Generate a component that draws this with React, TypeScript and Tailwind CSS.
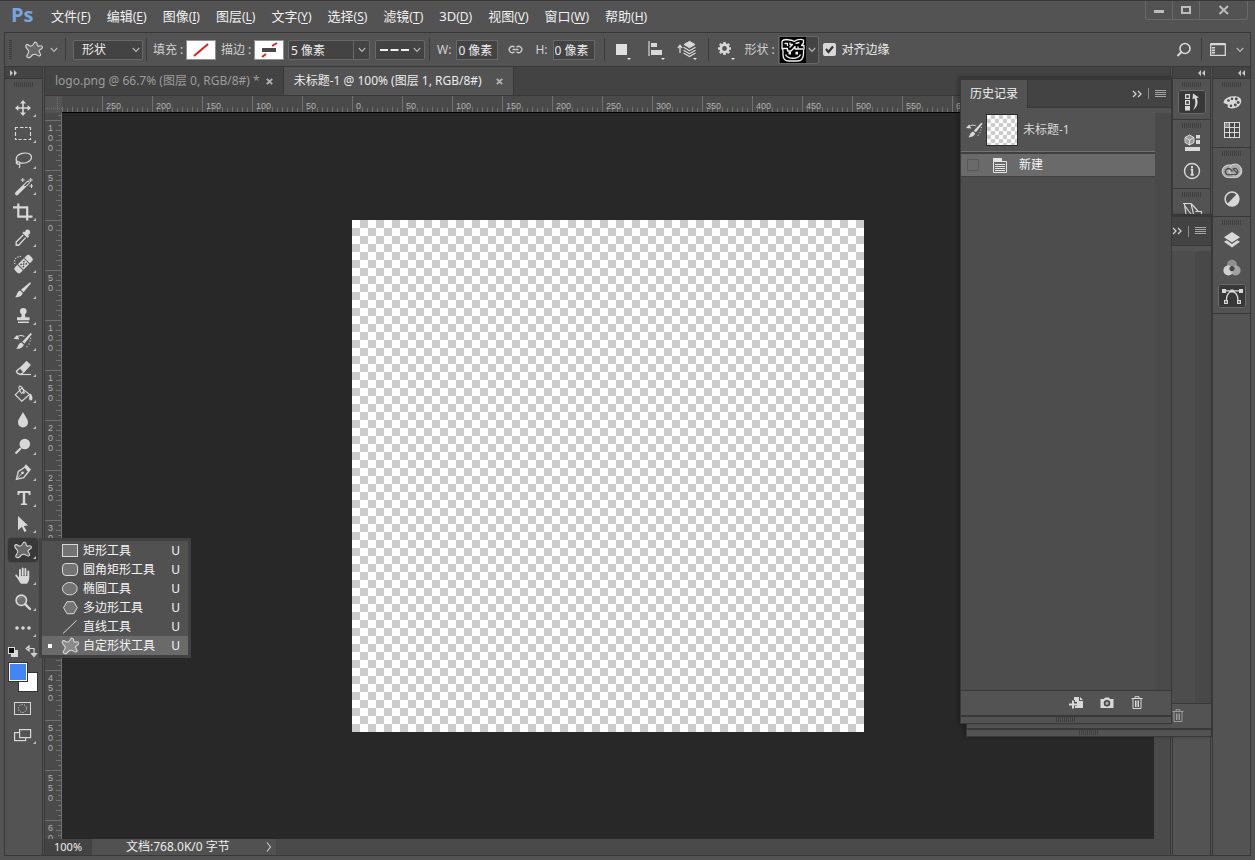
import type { ReactNode } from "react";

const FG = "#d8d8d8";

/* ---------- small shared pieces ---------- */

function Grip({ className = "" }: { className?: string }) {
  return (
    <div
      className={
        "h-[5px] w-[20px] shrink-0 bg-[repeating-linear-gradient(90deg,#3f3f3f_0_1px,transparent_1px_2px)] " + className
      }
    />
  );
}

function Chevron({ className = "" }: { className?: string }) {
  return (
    <svg width="8" height="6" viewBox="0 0 8 6" className={"pointer-events-none shrink-0 " + className}>
      <path d="M0.8 1 L4 4.4 L7.2 1" fill="none" stroke="#b8b8b8" strokeWidth="1.1" />
    </svg>
  );
}

function MenuLines() {
  return (
    <svg width="11" height="8" viewBox="0 0 11 8">
      <path d="M0 .5H11M0 2.5H11M0 4.5H11M0 6.5H11" stroke="#a4a4a4" />
    </svg>
  );
}

function DoubleRight() {
  return (
    <svg width="10" height="8" viewBox="0 0 10 8">
      <path d="M1 1L4 4L1 7M6 1L9 4L6 7" fill="none" stroke="#d0d0d0" strokeWidth="1.3" />
    </svg>
  );
}

function Trash({ color = FG }: { color?: string }) {
  return (
    <svg width="12" height="14" viewBox="0 0 12 14">
      <path d="M.5 2.5H11.5M4 2.3V.7H8V2.3M2 3V12.5H10V3M4.5 4.5V11M6 4.5V11M7.5 4.5V11" fill="none" stroke={color} />
    </svg>
  );
}

function Blob({ selected = false }: { selected?: boolean }) {
  return (
    <path
      d="M6.8 6.6C7.5 5.2 9 5.4 10 6.3C11.5 7.6 13 7.2 14 5.8L15 4.2C15.8 2.8 17.6 2.8 18 4.4L18.2 6C18.4 7.2 19.2 7.3 20.4 6.9C22.5 6.2 24 7.4 23.2 9C22.6 10.2 20.4 10.4 20 11.8C19.7 13 21.6 14.2 21.6 15.6C21.5 17.3 19.8 17.4 18.4 16.4C16.8 15.2 14.8 14.8 13.4 16L11.4 18C9.8 19.4 7.4 18.6 7.8 16.8C8 15.4 10 14 9.8 12.4C9.6 10.6 6 9 6.8 6.6Z"
      fill={selected ? "#8a8a8a" : "#686868"}
      stroke={FG}
      strokeWidth="1.1"
    />
  );
}

function HistoryBrush() {
  return (
    <g fill={FG}>
      <path d="M22.5 4L24 5L16.6 14.5L14.2 12.7Z" />
      <path d="M13.3 13.6L15.8 15.6C15 19 11.5 20 8.2 20C10 18.4 9.8 15 13.3 13.6Z" />
      <path d="M9 6L5.6 9.8L11.4 10.4Z" />
      <path d="M8.6 8.2C11 6 14 6.2 16.4 7.4" fill="none" stroke={FG} strokeWidth="1.1" />
      <path d="M22 9.2H23.2M21.5 12H22.7M20.4 15H21.6M18.4 17.8H19.6" stroke={FG} strokeWidth="1.1" />
    </g>
  );
}

/* ---------- menu bar ---------- */

const menus: [string, string][] = [
  ["文件", "F"],
  ["编辑", "E"],
  ["图像", "I"],
  ["图层", "L"],
  ["文字", "Y"],
  ["选择", "S"],
  ["滤镜", "T"],
  ["3D", "D"],
  ["视图", "V"],
  ["窗口", "W"],
  ["帮助", "H"],
];

function MenuBar() {
  return (
    <header className="flex h-[31px] shrink-0 items-start pl-[11px] pr-[7px]">
      <div className="w-[40px] font-['Open_Sans',sans-serif] text-[20px] leading-[28px] font-bold text-[#78a3dc]">Ps</div>
      <nav className="flex gap-[16px] pt-[6px]">
        {menus.map(([name, key]) => (
          <button key={name} className="flex items-baseline text-[13px] leading-[18px] whitespace-nowrap text-[#f0f0f0]">
            {name}
            <span className="text-[12px]">
              (<u className="underline-offset-2">{key}</u>)
            </span>
          </button>
        ))}
      </nav>
      <div className="ml-auto flex h-[19px] divide-x divide-[#696969] rounded-b-[3px] border border-t-0 border-[#696969]">
        <button aria-label="最小化" className="flex w-[27px] items-center justify-center">
          <svg width="12" height="10"><rect x="1" y="5" width="10" height="3" fill="#bcbcbc" /></svg>
        </button>
        <button aria-label="最大化" className="flex w-[27px] items-center justify-center">
          <svg width="12" height="10"><rect x="2" y="2" width="8" height="6" fill="none" stroke="#bcbcbc" strokeWidth="2" /></svg>
        </button>
        <button aria-label="关闭" className="flex w-[47px] items-center justify-center">
          <svg width="12" height="10"><path d="M1.5 1L10 9M10 1L1.5 9" stroke="#bcbcbc" strokeWidth="2" /></svg>
        </button>
      </div>
    </header>
  );
}

/* ---------- options bar ---------- */

function Divider({ className = "" }: { className?: string }) {
  return <div className={"h-[23px] w-px shrink-0 bg-[#3c3c3c] " + className} />;
}

function CornerDot() {
  return <path d="M0 0H4L2 2Z" fill="#e8e8e8" />;
}

function OptionsBar() {
  const field = "h-[20px] rounded-[2px] border border-[#686868] bg-[#434343] text-[12px] text-[#ececec] outline-none";
  return (
    <div className="mx-[4px] flex h-[34px] shrink-0 items-center border-x border-t border-[#383838] pl-[4px] text-[12px] whitespace-nowrap text-[#d0d0d0]">
      <div className="h-[20px] w-[3px] shrink-0 bg-[repeating-linear-gradient(180deg,#3c3c3c_0_1px,transparent_1px_2px)]" />
      <button aria-label="自定形状工具" className="ml-[7px] flex shrink-0 items-center gap-[4px]">
        <svg width="30" height="26" viewBox="0 0 30 26"><g transform="translate(0 2)"><Blob /></g></svg>
        <Chevron className="-ml-[3px]" />
      </button>
      <Divider className="ml-[7px]" />
      <div className="relative ml-[7px] flex shrink-0 items-center">
        <select aria-label="工具模式" className={field + " w-[70px] appearance-none pl-[8px]"} defaultValue="形状">
          <option>形状</option>
          <option>路径</option>
        </select>
        <Chevron className="absolute right-[3px]" />
      </div>
      <Divider className="ml-[3px]" />
      <span className="ml-[6px] w-[30px]">填充 :</span>
      <button aria-label="填充" className="ml-[3px] h-[20px] w-[30px] shrink-0 border border-[#909090] bg-white p-px">
        <svg width="26" height="16"><rect width="26" height="16" fill="#fff" /><path d="M6 14L20 2" stroke="#dc1f1f" strokeWidth="2" /></svg>
      </button>
      <span className="ml-[5px] w-[30px]">描边 :</span>
      <button aria-label="描边" className="ml-[3px] h-[20px] w-[30px] shrink-0 border border-[#909090] bg-white p-px">
        <svg width="26" height="16"><rect width="26" height="16" fill="#fff" /><path d="M6 15L10 12M16 4L21 1" stroke="#dc1f1f" strokeWidth="2" /><rect x="6" y="6" width="14" height="4" fill="#484848" /></svg>
      </button>
      <div className="ml-[4px] flex shrink-0">
        <input aria-label="描边宽度" defaultValue="5 像素" className={field + " w-[66px] rounded-r-none pl-[2px]"} />
        <button aria-label="描边宽度选项" className={field + " -ml-px flex w-[17px] items-center justify-center rounded-l-none"}><Chevron /></button>
      </div>
      <button aria-label="描边类型" className={field + " ml-[5px] flex w-[50px] shrink-0 items-center justify-between pr-[3px] pl-[4px]"}>
        <svg width="30" height="2"><path d="M0 1H8M10.5 1H18.5M21 1H29" stroke="#f0f0f0" strokeWidth="2" /></svg>
        <Chevron />
      </button>
      <Divider className="ml-[4px]" />
      <label className="ml-[7px] flex shrink-0 items-center gap-[5px]">W:
        <input defaultValue="0 像素" className={field + " w-[42px] rounded-none pl-px"} />
      </label>
      <button aria-label="链接形状的宽度和高度" className="ml-[10px] shrink-0">
        <svg width="15" height="10" viewBox="0 0 15 10"><path d="M6.5 2.2A3.1 3.1 0 1 0 6.5 6.8M8.5 2.2A3.1 3.1 0 1 1 8.5 6.8M4.5 4.5H10.5" fill="none" stroke="#c8c8c8" strokeWidth="1.4" /></svg>
      </button>
      <label className="ml-[12px] flex shrink-0 items-center gap-[5px]">H:
        <input defaultValue="0 像素" className={field + " w-[42px] rounded-none pl-px"} />
      </label>
      <Divider className="ml-[9px]" />
      <button aria-label="路径操作" className="ml-[11px] shrink-0">
        <svg width="16" height="20"><rect y="4" width="11" height="11" fill="#e0e0e0" /><g transform="translate(11 18)"><CornerDot /></g></svg>
      </button>
      <button aria-label="路径对齐方式" className="ml-[16px] shrink-0">
        <svg width="18" height="20"><path d="M1 1V16" stroke={FG} strokeWidth="1.2" /><path d="M3 3H9V7H3ZM3 10H14V15H3Z" fill={FG} /><g transform="translate(13 18)"><CornerDot /></g></svg>
      </button>
      <button aria-label="路径排列方式" className="ml-[11px] shrink-0">
        <svg width="22" height="20">
          <path d="M3 13V6M0.8 8L3 5.2L5.2 8" fill="none" stroke={FG} strokeWidth="1.3" />
          <path d="M7 4.5L12.5 1.3L18 4.5L12.5 7.8Z" fill={FG} stroke={FG} />
          <path d="M6.5 7.3L12.5 10.8L18.5 7.3M6.5 10.3L12.5 13.8L18.5 10.3M6.5 13L12.5 16.5L18.5 13" fill="none" stroke={FG} strokeWidth="1.2" />
          <g transform="translate(16 18)"><CornerDot /></g>
        </svg>
      </button>
      <Divider className="ml-[9px]" />
      <button aria-label="几何选项" className="ml-[8px] shrink-0">
        <svg width="18" height="20">
          <circle cx="7.5" cy="8.5" r="3.7" fill="none" stroke={FG} strokeWidth="2.6" />
          <path d="M7.5 2V4M7.5 13V15M1 8.5H3M12 8.5H14M2.9 3.9L4.3 5.3M10.7 11.7L12.1 13.1M12.1 3.9L10.7 5.3M4.3 11.7L2.9 13.1" stroke={FG} strokeWidth="2.6" />
          <g transform="translate(14 18)"><CornerDot /></g>
        </svg>
      </button>
      <span className="ml-[10px] w-[30px]">形状 :</span>
      <button aria-label="形状" className="ml-[3px] flex h-[28px] w-[41px] shrink-0 items-center justify-between rounded-[2px] border border-[#686868] bg-[#434343] pr-[2px]">
        <svg width="28" height="26" viewBox="0 0 28 26">
          <rect x="1" width="26" height="26" fill="#000" />
          <g fill="none" stroke="#f2f2f2" strokeWidth="1.3" strokeLinejoin="round">
            <path d="M3 11.5V5C3 2.5 5.5 3 7.5 2.5L13.5 3.5L15 4.5C18 2.5 22 2 24.5 3V6L22.5 8.5H25V12C24.5 12.5 24.5 12 24.5 16.5C24.5 22 22 24 18 24H10C6 24 4 22 4 17.5V13.5L3 11.5H8.5V14H12L14 12L16 9.5V12H19V9.5M5.5 6.5H8.5V9M11 5.5V7.5H13.5L10.5 10.5M16.5 6.5L20.5 5.5M19.5 12H24" />
            <path d="M6.5 17.5C8.5 22.5 19.5 22.5 21.5 17.5" />
          </g>
          <path d="M9.5 14.8H12V17.6H9.5ZM16.5 14.8H19V17.6H16.5Z" fill="#f2f2f2" />
        </svg>
        <Chevron />
      </button>
      <label className="ml-[4px] flex shrink-0 items-center gap-[6px] text-[#ececec]">
        <span className="relative flex size-[13px]">
          <input type="checkbox" defaultChecked className="peer size-[13px] appearance-none rounded-[2px] bg-[#d8d8d8]" />
          <svg width="13" height="13" className="pointer-events-none absolute inset-0 hidden peer-checked:block"><path d="M3 6L5.5 9L10 3.5" fill="none" stroke="#333" strokeWidth="2.2" /></svg>
        </span>
        对齐边缘
      </label>
      <button aria-label="搜索" className="ml-auto shrink-0">
        <svg width="16" height="16"><circle cx="9" cy="6.5" r="5" fill="none" stroke={FG} strokeWidth="1.6" /><path d="M5.4 10L1.5 14" stroke={FG} strokeWidth="2" /></svg>
      </button>
      <Divider className="ml-[9px]" />
      <button aria-label="工作区" className="ml-[8px] flex shrink-0 items-center gap-[10px] pr-[6px]">
        <svg width="16" height="13"><path d="M.7 1.5H15.3V12.3H.7Z" fill="none" stroke={FG} strokeWidth="1.3" /><path d="M.5 1H15.5" stroke={FG} strokeWidth="2" /><path d="M3.5 4V10.5" stroke={FG} strokeWidth="3" strokeDasharray="1.6 0.8" /></svg>
        <Chevron />
      </button>
    </div>
  );
}

/* ---------- tools ---------- */

const tools: { name: string; icon: ReactNode }[] = [
  {
    name: "移动工具",
    icon: <><path d="M15 7V19M9 13H21" stroke={FG} strokeWidth="1.6" /><path d="M15 5L12 8.4H18ZM15 21L12 17.6H18ZM7 13L10.4 10V16ZM23 13L19.6 10V16Z" fill={FG} /></>,
  },
  { name: "矩形选框工具", icon: <path d="M7.5 9V6.5H10M12 6.5H15.5M17 6.5H19.5M21 6.5H22.5V9M22.5 11V15M22.5 17V18.5H20.5M18.5 18.5H15.5M13.5 18.5H10.5M9 18.5H7.5V17M7.5 15V11" fill="none" stroke={FG} strokeWidth="1.2" /> },
  { name: "套索工具", icon: <g fill="none" stroke={FG} strokeWidth="1.2"><path d="M10 16C6.5 13 8 8 14 6.4C20 5 24 7.5 23.4 10.8C22.8 14.6 17 17.2 11.5 15.8" /><path d="M8 15.2C9.5 13.8 12.6 14.8 11.8 16.6C11 18 8.2 17 8 15.2M11.5 16.8C12.2 18.5 12.4 19.6 11 21" /></g> },
  { name: "魔棒工具", icon: <><path d="M8.8 20.5L20 9.5" stroke={FG} strokeWidth="3.6" strokeLinecap="round" /><path d="M17 12.5L20 9.6" stroke="#535353" strokeWidth="1.5" strokeLinecap="round" /><path d="M14.7 5V9M12.7 7H16.7M22.7 5V9M20.7 7H24.7M23.5 11V15M21.5 13H25" stroke={FG} strokeWidth="1" /></> },
  { name: "裁剪工具", icon: <path d="M5 8.3H19.2V21.5M10.3 4.5V17.6H24.5" fill="none" stroke={FG} strokeWidth="2.2" /> },
  { name: "吸管工具", icon: <><path d="M17.5 5.5C19 3.5 22.5 5 22.2 7.5C22 9 20.8 9.6 20.2 10.3L21 11.5L19.5 13L14.3 8L15.8 6.6L17 7.2Z" fill={FG} /><path d="M15.2 10L8.2 17V20.2H10.6L17.6 12.6" fill="none" stroke={FG} strokeWidth="1.4" /></> },
  { name: "污点修复画笔工具", icon: <><g transform="rotate(-45 15.5 13)"><rect x="5" y="9.2" width="21" height="7.8" rx="2.6" fill={FG} /><path d="M11 9V18M20 9V18" stroke="#535353" /><path d="M12.7 11.6H14.4M16.6 11.6H18.3M14.6 13.2H16.4M12.7 14.8H14.4M16.6 14.8H18.3" stroke="#535353" strokeWidth="1.5" /></g><path d="M7 13C5.4 9 8 5 14.5 5.4" fill="none" stroke={FG} strokeWidth="1.2" strokeDasharray="1.2 1.4" /></> },
  { name: "画笔工具", icon: <g fill={FG}><path d="M22 5.3L23 6.3L15.6 15.2L12.9 12.8Z" /><path d="M12 13.6L14.8 16.1C14 19.4 10.8 20.4 7 20.3C9.2 19 8.7 14.6 12 13.6Z" /></g> },
  { name: "仿制图章工具", icon: <g fill={FG}><circle cx="15.3" cy="8.2" r="3.3" /><path d="M13.8 10H16.8L17.3 14.2H21.5V17.2H9V14.2H13.3ZM10 18.6H20.8V19.9H10Z" /></g> },
  { name: "历史记录画笔工具", icon: <HistoryBrush /> },
  { name: "橡皮擦工具", icon: <><path d="M18.6 6.2L22.4 10L15.8 17.3L11.8 13Z" fill={FG} stroke={FG} strokeLinejoin="round" /><path d="M11.8 13L8.4 16.2C9 18.2 10.3 19.2 12.8 19.3L15.6 17.2" fill="none" stroke={FG} strokeWidth="1.3" /><path d="M11 19.5H23" stroke={FG} strokeWidth="1.2" /></> },
  { name: "油漆桶工具", icon: <><path d="M7.2 13.8L13.8 7.2L21.5 13.4L13.8 20.2Z" fill="none" stroke={FG} strokeWidth="1.2" /><path d="M14 13C11.6 10 9.8 6.2 11.5 5.2C13 4.5 15 7 16 11.5" fill="none" stroke={FG} strokeWidth="1.1" /><circle cx="15.5" cy="11.5" r="1.3" fill={FG} /><path d="M22.6 12.5C24.8 15 25.2 19.4 22.8 19.4C20.4 19.4 20.6 15 22.6 12.5Z" fill={FG} /></> },
  { name: "模糊工具", icon: <path d="M15 5C17 9 20 12 20 15.4A5 5 0 0 1 10 15.4C10 12 13 9 15 5Z" fill={FG} /> },
  { name: "减淡工具", icon: <><circle cx="16.8" cy="11" r="5.3" fill={FG} /><path d="M13 15L7.5 20.5" stroke={FG} strokeWidth="2.1" /></> },
  { name: "钢笔工具", icon: <><path d="M8.4 20.4L10.4 12.4L17.2 8L20.6 12.5L15.6 18.6Z" fill="none" stroke={FG} strokeWidth="1.4" /><path d="M18 5.3L23 10.6L21.2 12.7L16.4 7.3Z" fill={FG} /><path d="M8.8 20L14 14.4" stroke={FG} /><circle cx="14.5" cy="13.8" r="1.4" fill={FG} /></> },
  { name: "横排文字工具", icon: <path d="M9.5 6H22.5V10H20.9L20.2 8.1H17.2V18.2L19.2 18.8V20H12.9V18.8L14.8 18.2V8.1H11.8L11.1 10H9.5Z" fill={FG} /> },
  { name: "路径选择工具", icon: <path d="M10 5L20 14.5L15.8 14.9L18.6 20L16.4 21L13.9 15.8L10 19.2Z" fill={FG} /> },
  { name: "自定形状工具", icon: <g transform="translate(0 2)"><Blob /></g> },
  { name: "抓手工具", icon: <g fill="none" stroke={FG} strokeLinecap="round" strokeWidth="1.9"><path d="M12 13V7M14.7 12V5.5M17.4 12V6M20.3 13.5V8.5M8.2 12.5L11.4 16.5" /><path d="M11.2 13H21.2V15.5C21 18 19.5 20.4 18.6 20.8H13C12 19.8 10.5 17.5 10 15.5Z" fill={FG} stroke="none" /></g> },
  { name: "缩放工具", icon: <><circle cx="13.3" cy="11.3" r="5.2" fill="#6e6e6e" stroke={FG} strokeWidth="1.6" /><path d="M17.3 15.3L22 20" stroke={FG} strokeWidth="2.4" strokeLinecap="round" /><path d="M10.5 10.5C11.2 8.8 12.3 8.4 13.8 8.4" stroke="#999" fill="none" /></> },
  { name: "编辑工具栏", icon: <g fill={FG}><circle cx="9" cy="13" r="1.8" /><circle cx="15" cy="13" r="1.8" /><circle cx="21" cy="13" r="1.8" /></g> },
];

const shapes: { name: string; icon: ReactNode }[] = [
  { name: "矩形工具", icon: <rect x="1.5" y="2.5" width="15" height="12" /> },
  { name: "圆角矩形工具", icon: <rect x="1.5" y="2.5" width="15" height="12" rx="3.5" /> },
  { name: "椭圆工具", icon: <ellipse cx="8.8" cy="8.7" rx="7.4" ry="6.2" /> },
  { name: "多边形工具", icon: <path d="M6 2.7H12.8L16.3 8.7L12.8 14.7H6L2.5 8.7Z" /> },
  { name: "直线工具", icon: <path d="M2 15.5L15.5 2.5" /> },
  { name: "自定形状工具", icon: <g transform="translate(-5.5 -2)"><Blob selected /></g> },
];

function ShapeFlyout() {
  return (
    <div className="absolute top-px left-[31px] z-30 w-[152px] border-3 border-[#414141] bg-[#515151]" role="menu">
      {shapes.map((s, i) => {
        const active = i === shapes.length - 1;
        return (
          <button
            key={s.name}
            role="menuitem"
            className={
              "flex h-[19px] w-full items-center pr-[8px] text-[12px] leading-[19px] text-[#f4f4f4] " + (active ? "bg-[#6a6a6a]" : "")
            }
          >
            <span className="flex w-[19px] shrink-0 justify-center">
              {active && <span className="-ml-[4px] size-[4px] bg-white" />}
            </span>
            <svg width="18" height="18" viewBox="0 0 18 18" fill="#737373" stroke={FG} strokeWidth="1" className="shrink-0">{s.icon}</svg>
            <span className="ml-[4px] whitespace-nowrap">{s.name}</span>
            <span className="ml-auto">U</span>
          </button>
        );
      })}
    </div>
  );
}

function ToolBar() {
  return (
    <aside className="flex w-[37px] shrink-0 flex-col">
      <div className="flex h-[12px] w-full shrink-0 items-center border-b border-[#383838] bg-[#434343] pl-[5px]">
        <svg width="7" height="6"><path d="M0 0L3 3L0 6ZM4 0L7 3L4 6Z" fill="#c8c8c8" /></svg>
      </div>
      <Grip className="mt-[3px] mb-[8px] ml-[9px]" />
      <div className="flex flex-col pl-[3px]">
        {tools.map((t) => {
          const active = t.name === "自定形状工具";
          return (
            <div key={t.name} className="relative h-[26px] shrink-0 py-px">
              <button aria-label={t.name} className={"block w-[30px] rounded-[3px] " + (active ? "bg-[#383838] outline outline-[#4b4b4b]" : "")}>
                <svg width="30" height="24" viewBox="0 1 30 24" className="block">
                  {t.icon}
                  <path d="M28 19V22H25Z" fill="#c0c0c0" />
                </svg>
              </button>
              {active && <ShapeFlyout />}
            </div>
          );
        })}
        <button aria-label="默认前景色和背景色" className="h-[21px] w-[30px] shrink-0">
          <svg width="30" height="21" viewBox="0 0 30 21">
            <rect x="3.5" y="9.5" width="6" height="6" fill={FG} stroke={FG} />
            <rect x="0.5" y="6.5" width="6" height="6" fill="#111" stroke="#ddd" />
            <path d="M21 7.5H26V14M21 5L18.2 7.5L21 10ZM23.6 12.6L26 15.6L28.4 12.6Z" fill="none" stroke={FG} strokeWidth="1.2" />
          </svg>
        </button>
        <div className="relative h-[30px] w-[30px] shrink-0">
          <button aria-label="背景色" className="absolute right-0 bottom-0 size-[20px] border border-[#333] bg-white" />
          <button aria-label="前景色" className="absolute top-0 left-0 size-[20px] border border-[#333] bg-[#4285f4] ring-1 ring-white ring-inset" />
        </div>
        <button aria-label="以快速蒙版模式编辑" className="mt-[4px] h-[26px] shrink-0">
          <svg width="30" height="26" viewBox="0 0 30 26"><rect x="6.5" y="6.5" width="16" height="12" fill="none" stroke={FG} /><circle cx="14.5" cy="12.5" r="4" fill="none" stroke={FG} strokeDasharray="1.1 1.4" /></svg>
        </button>
        <button aria-label="更改屏幕模式" className="h-[26px] shrink-0">
          <svg width="30" height="26" viewBox="0 0 30 26"><rect x="6.6" y="10.6" width="11" height="8" fill="none" stroke={FG} strokeWidth="1.2" /><rect x="11.6" y="7.6" width="11" height="8" fill="#535353" stroke={FG} strokeWidth="1.2" /><path d="M28 19V22H25Z" fill="#c0c0c0" /></svg>
        </button>
      </div>
    </aside>
  );
}

/* ---------- rulers and canvas ---------- */

const range = (from: number, to: number, step: number) =>
  Array.from({ length: Math.ceil((to - from) / step) }, (_, i) => from + i * step);

const H_ZERO = 290;
const V_ZERO = 107;

function HorizontalRuler() {
  return (
    <svg className="h-[16px] min-w-0 flex-1 bg-[#4a4a4a]" shapeRendering="crispEdges">
      {range(-290, 2400, 5).map((u) => (
        <rect key={u} x={H_ZERO + u} y={u % 50 === 0 ? 0 : u % 10 === 0 ? 11 : 12} width="1" height="16" fill="#707070" />
      ))}
      {range(-250, 801, 50).map((u) => (
        <text key={u} x={H_ZERO + u + 4} y="13" className="font-['Liberation_Sans',sans-serif] text-[9px]" fill="#b0b0b0">{Math.abs(u)}</text>
      ))}
    </svg>
  );
}

function VerticalRuler() {
  return (
    <svg className="min-h-0 w-[17px] flex-1 bg-[#4a4a4a]" shapeRendering="crispEdges">
      {range(-105, 2000, 5).map((u) => (
        <rect key={u} x={u % 50 === 0 ? 0 : u % 10 === 0 ? 11 : 13} y={V_ZERO + u} width="17" height="1" fill="#707070" />
      ))}
      {range(-100, 601, 50).map((u) =>
        String(Math.abs(u)).split("").slice(0, u === 600 ? 2 : 3).map((d, i) => (
          <text key={u + "-" + i} x="3" y={V_ZERO + u + 11 + i * 10} className="font-['Liberation_Sans',sans-serif] text-[9px]" fill="#b0b0b0">{d}</text>
        )),
      )}
      <rect x="16" width="1" height="100%" fill="#707070" />
    </svg>
  );
}

function Tab({ title, active }: { title: string; active?: boolean }) {
  return (
    <div
      className={
        "flex h-[28px] items-center justify-between border-r border-[#383838] px-[10px] text-[12px] whitespace-nowrap " +
        (active ? "min-w-[230px] bg-[#535353] text-[#ececec]" : "bg-[#434343] text-[#9c9c9c]")
      }
    >
      <button>{title}</button>
      <button aria-label={"关闭 " + title} className="ml-[6px]">
        <svg width="7" height="7"><path d="M.8 .8L6.2 6.2M6.2 .8L.8 6.2" stroke="#b0b0b0" strokeWidth="1.9" /></svg>
      </button>
    </div>
  );
}

function DocumentArea() {
  return (
    <main className="flex min-w-0 flex-1 flex-col">
      <div className="flex h-[29px] shrink-0 border-b border-[#383838] bg-[#434343]">
        <Tab title="logo.png @ 66.7% (图层 0, RGB/8#) *" />
        <Tab title="未标题-1 @ 100% (图层 1, RGB/8#)" active />
      </div>
      <div className="flex min-h-0 flex-1">
        <div className="flex w-[17px] shrink-0 flex-col">
          <svg width="17" height="17" className="shrink-0 bg-[#535353]"><path d="M12.5 1V17M0 12.5H17" stroke="#6e6e6e" strokeDasharray="1 1" /></svg>
          <VerticalRuler />
        </div>
        <div className="flex min-w-0 flex-1 flex-col">
          <div className="flex h-[17px] shrink-0 border-b border-black">
            <HorizontalRuler />
          </div>
          <div className="flex min-h-0 flex-1">
            <div className="flex min-w-0 flex-1 items-center justify-center overflow-hidden bg-[#282828]">
              <div className="size-[512px] shrink-0 bg-[conic-gradient(#ccc_25%,#fff_0_50%,#ccc_0_75%,#fff_0)] bg-[length:16px_16px]" />
            </div>
            <div className="w-[16px] shrink-0 bg-[#4a4a4a]" />
          </div>
        </div>
      </div>
      <footer className="flex h-[16px] shrink-0 bg-[#4a4a4a] text-[12px] leading-[16px] text-[#ececec]">
        <input aria-label="缩放比例" defaultValue="100%" className="h-[16px] w-[48px] border-r border-[#4f4f4f] bg-[#434343] pl-[9px] text-[11px] outline-none" />
        <button className="flex w-[184px] items-center justify-between border-r border-[#484848] bg-[#515151] pr-[4px] pl-[33px] whitespace-nowrap">
          <span>文档:768.0K/0 字节</span>
          <svg width="6" height="10"><path d="M1 .5L4.5 5L1 9.5" fill="none" stroke="#c8c8c8" strokeWidth="1.2" /></svg>
        </button>
      </footer>
    </main>
  );
}

/* ---------- docked icon columns ---------- */

type DockIcon = { name: string; icon: ReactNode; active?: boolean };

const dockA: DockIcon[][] = [
  [{ name: "历史记录", active: true, icon: <><path d="M7.6 6.6H11.4V10.4H7.6ZM7.6 12.6H11.4V16.4H7.6Z" fill="none" stroke={FG} strokeWidth="1.2" /><rect x="7" y="18" width="5" height="4.5" fill={FG} /><path d="M15 22C20 19 20.5 13 18.5 10L21 9.5L15 5.5L14.5 11.5L16.5 10.3C18 13.5 17.5 18 15 22Z" fill={FG} /></> }],
  [
    { name: "属性", icon: <><path d="M7 8.5L11.5 6L16 8.5V13.5L11.5 16L7 13.5Z" fill="#999" stroke={FG} /><path d="M7 8.5L11.5 11L16 8.5M11.5 11V16" fill="none" stroke={FG} /><path d="M18 6H22V9.5H18ZM18 11H22V15H18ZM7 18H22V22H7Z" fill={FG} /></> },
    { name: "信息", icon: <><circle cx="14" cy="14" r="7.5" fill="none" stroke={FG} strokeWidth="1.4" /><path d="M14 9V11.2M12.8 12.8H14.2V17.5M12.6 17.8H15.8" stroke={FG} strokeWidth="1.9" fill="none" /></> },
  ],
  [{ name: "字形", icon: <path d="M5 5.5H13L16.5 20M6.5 6L8.5 20M7 8L16 20M13 5.5L20 13M17.5 13.5H23.5V20" fill="none" stroke={FG} strokeWidth="1.2" /> }],
];

const dockB: DockIcon[][] = [
  [
    { name: "颜色", icon: <><path d="M5.6 14C6.6 9.5 14 7.5 19 8.6C24 9.8 24.5 14.5 21.2 17.8C18 21 11 21.2 9.6 19C9 17.8 10.8 17 9.6 16.4C8.2 15.8 5.2 16.4 5.6 14Z" fill={FG} /><g fill="#4a4a4a"><circle cx="10.5" cy="12.5" r="1.3" /><circle cx="14" cy="10.8" r="1.3" /><circle cx="18.3" cy="11" r="1.4" /><circle cx="20.2" cy="14.5" r="1.4" /><circle cx="17.3" cy="17" r="1.4" /><circle cx="13" cy="17.8" r="1.3" /></g></> },
    { name: "色板", icon: <><rect x="6.5" y="6.5" width="15" height="15" fill="#494949" stroke={FG} /><path d="M7 7H11V11H7Z" fill="#8c8c8c" /><path d="M11.5 7V21.5M16.5 7V21.5M7 11.5H21.5M7 16.5H21.5" stroke={FG} /></> },
  ],
  [
    { name: "库", icon: <><rect x="4.2" y="8" width="19.6" height="12.6" rx="6.3" fill="#a8a8a8" stroke={FG} /><circle cx="17.3" cy="13" r="6" fill="#a8a8a8" stroke={FG} strokeWidth="1" /><path d="M14.5 14.5L12.6 12.4A3.1 3.1 0 1 0 11.5 17.6H18.2A3.2 3.2 0 1 0 15 12L19 16" fill="none" stroke="#4c4c4c" strokeWidth="1.3" /></> },
    { name: "调整", icon: <><circle cx="14" cy="14" r="6.9" fill="none" stroke={FG} strokeWidth="1.5" /><path d="M18.9 9.1A6.9 6.9 0 0 1 9.1 18.9Z" fill={FG} /></> },
  ],
  [
    { name: "图层", icon: <><path d="M14 6L22 11.2L14 16.4L6 11.2Z" fill={FG} /><path d="M6 15.8L8.6 14.3L14 18L19.4 14.3L22 15.8L14 21.6Z" fill={FG} /></> },
    { name: "通道", icon: <><circle cx="14" cy="10.8" r="5" fill="#8f8f8f" /><circle cx="10.4" cy="16.4" r="5" fill="#dedede" fillOpacity=".9" /><circle cx="17.6" cy="16.4" r="5" fill="#b0b0b0" fillOpacity=".85" /><circle cx="14" cy="14.6" r="2.6" fill="#484848" /></> },
    { name: "路径", active: true, icon: <><path d="M5 8.8H23M8.4 18.5C8.4 13 10.5 10.2 14 9.2C17.5 10.2 20 13 20 18.5" fill="none" stroke={FG} strokeWidth="1.3" /><path d="M4 7H8V11H4ZM21 7H25V11H21ZM12.5 7.5H15.5V10.5H12.5Z" fill={FG} /><path d="M6.6 18.6H9.4V21.4H6.6ZM19.6 18.6H22.4V21.4H19.6Z" fill="#383838" stroke={FG} strokeWidth="1.2" /></> },
  ],
];

function Dock({ groups }: { groups: DockIcon[][] }) {
  return (
    <aside className="flex w-[37px] shrink-0 flex-col">
      <div className="flex h-[12px] shrink-0 items-center justify-end border-b border-[#383838] bg-[#434343] pr-[5px]">
        <svg width="7" height="6"><path d="M3 0L0 3L3 6ZM7 0L4 3L7 6Z" fill="#c8c8c8" /></svg>
      </div>
      {groups.map((g, i) => (
        <div key={i} className="flex shrink-0 flex-col border-b border-[#383838] py-[3px] pl-[5px]">
          <Grip className="mb-px ml-[4px]" />
          {g.map((d) => (
            <button key={d.name} aria-label={d.name} className="flex h-[28px] w-[28px] items-center">
              <span className={"rounded-[3px] " + (d.active ? "bg-[#383838] outline -outline-offset-1 outline-[#6a6a6a]" : "")}>
                <svg width="28" height="24" viewBox="0 2 28 24" className="block">{d.icon}</svg>
              </span>
            </button>
          ))}
        </div>
      ))}
    </aside>
  );
}

/* ---------- floating panels ---------- */

function PathsPanel() {
  return (
    <section aria-label="路径" className="absolute top-[147px] right-[38px] z-10 flex h-[523px] w-[246px] flex-col border-x border-t-3 border-b border-[#383838] bg-[#535353] shadow-[-3px_0_3px_rgba(0,0,0,0.2)]">
      <div className="flex h-[29px] shrink-0 items-center justify-end gap-[6px] border-b border-[#383838] bg-[#434343] pr-[5px]">
        <DoubleRight />
        <div className="h-[11px] w-px bg-[#8a8a8a]" />
        <MenuLines />
      </div>
      <div className="mt-[5px] flex min-h-0 flex-1 border-b border-[#383838] bg-[#4d4d4d]">
        <div className="ml-auto w-[16px] bg-[#484848]" />
      </div>
      <div className="flex h-[26px] shrink-0 items-center justify-end border-b-2 border-[#383838] pr-[27px]">
        <button aria-label="删除路径"><Trash color="#9a9a9a" /></button>
      </div>
      <div className="flex h-[6px] shrink-0 justify-center"><Grip /></div>
    </section>
  );
}

function HistoryPanel() {
  return (
    <section aria-label="历史记录" className="absolute top-[9px] right-[78px] z-20 flex h-[648px] w-[212px] flex-col border-x border-t-4 border-b border-[#383838] bg-[#535353] shadow-[-3px_0_3px_rgba(0,0,0,0.2)]">
      <div className="flex h-[28px] shrink-0 items-stretch">
        <h2 className="flex w-[66px] shrink-0 items-center justify-center text-[12px] text-[#f0f0f0]">历史记录</h2>
        <div className="flex flex-1 items-center justify-end gap-[6px] border-b border-l border-[#383838] bg-[#434343] pr-[5px]">
          <DoubleRight />
          <div className="h-[11px] w-px bg-[#8a8a8a]" />
          <MenuLines />
        </div>
      </div>
      <div className="flex min-h-0 flex-1 border-b border-[#383838]">
        <div className="flex min-w-0 flex-1 flex-col">
          <div className="flex h-[44px] shrink-0 items-center border-b border-[#727272] text-[12px] text-[#d8d8d8]">
            <svg width="19" height="18" viewBox="5 2 20 20" className="ml-[4px] shrink-0"><HistoryBrush /></svg>
            <div className="ml-[2px] size-[32px] shrink-0 border border-[#2c2c2c] bg-[conic-gradient(#ccc_25%,#fff_0_50%,#ccc_0_75%,#fff_0)] bg-[length:8px_8px]" />
            <span className="ml-[5px]">未标题-1</span>
          </div>
          <button className="flex h-[25px] shrink-0 items-center border-t-2 border-b border-[#404040] bg-[#6a6a6a] text-[12px] text-[#f4f4f4]">
            <span className="ml-[6px] size-[12px] shrink-0 border border-[#585858]" />
            <svg width="15" height="16" className="ml-[14px] shrink-0">
              <path d="M.5 4.5H13.5V15.5H.5Z" fill="none" stroke="#e4e4e4" />
              <path d="M0 1H9V4H0Z" fill="#e4e4e4" />
              <path d="M2 7.5H12M2 9.5H12M2 11.5H12M2 13.5H12" stroke="#e4e4e4" />
            </svg>
            <span className="ml-[11px]">新建</span>
          </button>
          <div className="flex-1 bg-[#4d4d4d]" />
        </div>
        <div className="mt-[5px] w-[16px] shrink-0 bg-[#4a4a4a]" />
      </div>
      <div className="flex h-[26px] shrink-0 items-center justify-end gap-[17px] border-b-2 border-[#383838] pr-[28px]">
        <button aria-label="从当前状态创建新文档">
          <svg width="14" height="12"><path d="M5 0H10V4H14V11H5Z" fill={FG} /><path d="M11 0V3H14Z" fill={FG} /><path d="M4 3V12M0 7H8" stroke="#535353" strokeWidth="4" /><path d="M4 3.5V11.5M0 7.5H8" stroke={FG} strokeWidth="2" /></svg>
        </button>
        <button aria-label="创建新快照">
          <svg width="14" height="12"><path d="M.5 2H4L5 .5H9L10 2H13.5V11H.5Z" fill={FG} /><circle cx="7" cy="6.3" r="2.5" fill="#aaa" stroke="#454545" strokeWidth="1.5" /></svg>
        </button>
        <button aria-label="删除当前状态"><Trash /></button>
      </div>
      <div className="flex h-[6px] shrink-0 justify-center"><Grip /></div>
    </section>
  );
}

export default function App() {
  return (
    <div className="flex h-screen flex-col overflow-hidden border-t border-[#383838] bg-[#535353] font-['Noto_Sans','Noto_Sans_CJK_SC',sans-serif] select-none">
      <MenuBar />
      <OptionsBar />
      <div className="relative mx-[4px] mb-[4px] flex min-h-0 flex-1 border border-[#383838]">
        <ToolBar />
        <div className="w-[3px] shrink-0 border-x border-[#383838]" />
        <DocumentArea />
        <div className="w-[3px] shrink-0 border-x border-[#383838]" />
        <Dock groups={dockA} />
        <div className="w-[3px] shrink-0 border-x border-[#383838]" />
        <Dock groups={dockB} />
        <PathsPanel />
        <HistoryPanel />
      </div>
    </div>
  );
}
